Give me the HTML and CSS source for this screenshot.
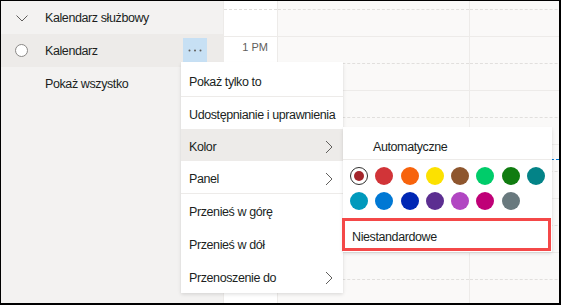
FILE: index.html
```html
<!DOCTYPE html>
<html lang="pl">
<head>
    <meta charset="UTF-8">
    <meta name="viewport" content="width=device-width, initial-scale=1.0">
    <title>Kalendarz</title>
    <link rel="stylesheet" href="styles.css">
</head>
<body>
    <div class="app">
        <aside class="sidebar">
            <div class="row">
                <svg class="icon" width="13" height="8" viewBox="0 0 13 8"><path d="M1 1.5 L6.5 7 L12 1.5" fill="none" stroke="#605e5c" stroke-width="1"/></svg>
                <span>Kalendarz służbowy</span>
            </div>
            <div class="row active">
                <span class="radio"></span>
                <span>Kalendarz</span>
                <button class="more">
                    <svg width="14" height="3" viewBox="0 0 14 3"><circle cx="1.5" cy="1.5" r="1" fill="#605e5c"/><circle cx="7" cy="1.5" r="1" fill="#605e5c"/><circle cx="12.5" cy="1.5" r="1" fill="#605e5c"/></svg>
                </button>
            </div>
            <div class="row">
                <span class="icon"></span>
                <span>Pokaż wszystko</span>
            </div>
        </aside>

        <section class="grid">
            <div class="col time">
                <div class="slot first"></div>
                <div class="slot hour"></div>
                <div class="slot half"><span class="label">1 PM</span></div>
                <div class="slot hour"></div>
                <div class="slot half"></div>
                <div class="slot hour"></div>
                <div class="slot half"></div>
                <div class="slot hour"></div>
                <div class="slot half"></div>
                <div class="slot hour"></div>
                <div class="slot half"></div>
                <div class="slot hour"></div>
            </div>
            <div class="col day">
                <div class="slot first"></div>
                <div class="slot hour"></div>
                <div class="slot half"></div>
                <div class="slot hour"></div>
                <div class="slot half"></div>
                <div class="slot hour"></div>
                <div class="slot half"></div>
                <div class="slot hour"></div>
                <div class="slot half"></div>
                <div class="slot hour"></div>
                <div class="slot half"></div>
                <div class="slot hour"></div>
            </div>
            <div class="col day wide">
                <div class="slot first"></div>
                <div class="slot hour"></div>
                <div class="slot half"></div>
                <div class="slot hour"></div>
                <div class="slot half"></div>
                <div class="slot hour"></div>
                <div class="slot half"></div>
                <div class="slot hour"></div>
                <div class="slot half"></div>
                <div class="slot hour"></div>
                <div class="slot half"></div>
                <div class="slot hour"></div>
            </div>
        </section>

        <div class="now-line"></div>

        <div class="menu context-menu">
            <div class="item">Pokaż tylko to</div>
            <div class="divider"></div>
            <div class="item">Udostępnianie i uprawnienia</div>
            <div class="item selected">Kolor
                <svg class="chevron" width="8" height="14" viewBox="0 0 8 14"><path d="M1 1 L7 7 L1 13" fill="none" stroke="#605e5c" stroke-width="1"/></svg>
            </div>
            <div class="item">Panel
                <svg class="chevron" width="8" height="14" viewBox="0 0 8 14"><path d="M1 1 L7 7 L1 13" fill="none" stroke="#605e5c" stroke-width="1"/></svg>
            </div>
            <div class="divider"></div>
            <div class="item tall">Przenieś w górę</div>
            <div class="item tall">Przenieś w dół</div>
            <div class="item tall">Przenoszenie do
                <svg class="chevron" width="8" height="14" viewBox="0 0 8 14"><path d="M1 1 L7 7 L1 13" fill="none" stroke="#605e5c" stroke-width="1"/></svg>
            </div>
        </div>

        <div class="menu color-menu">
            <div class="auto">Automatyczne</div>
            <div class="swatches">
                <span class="swatch current"><span class="dot"></span></span>
                <span class="swatch" style="background:#d13438"></span>
                <span class="swatch" style="background:#f7630c"></span>
                <span class="swatch" style="background:#fce100"></span>
                <span class="swatch" style="background:#8e562e"></span>
                <span class="swatch" style="background:#00cc6a"></span>
                <span class="swatch" style="background:#107c10"></span>
                <span class="swatch" style="background:#038387"></span>
                <span class="swatch" style="background:#0099bc"></span>
                <span class="swatch" style="background:#0078d4"></span>
                <span class="swatch" style="background:#0027b4"></span>
                <span class="swatch" style="background:#5c2e91"></span>
                <span class="swatch" style="background:#b146c2"></span>
                <span class="swatch" style="background:#bf0077"></span>
                <span class="swatch" style="background:#69797e"></span>
            </div>
            <div class="custom">Niestandardowe</div>
        </div>
    </div>
</body>
</html>
```

FILE: styles.css
```css
* {
    box-sizing: border-box;
}
body {
    margin: 0;
    font-family: "Liberation Sans", Arial, sans-serif;
    font-size: 12.5px;
    letter-spacing: -0.4px;
    color: #201f1e;
}
.app {
    position: relative;
    display: flex;
    width: 561px;
    height: 305px;
    border-style: solid;
    border-color: #000;
    border-width: 1px 2px 2px 1px;
    overflow: hidden;
    background: #fff;
}

/* sidebar */
.sidebar {
    width: 222px;
    flex-shrink: 0;
    background: #f3f2f1;
    white-space: nowrap;
}
.row {
    display: flex;
    align-items: center;
    height: 33px;
    padding-left: 14px;
}
.row.active {
    background: #edebe9;
}
.icon {
    width: 14px;
    margin-right: 16px;
    flex-shrink: 0;
}
.radio {
    width: 13px;
    height: 13px;
    margin-right: 17px;
    border: 1px solid #8a8886;
    border-radius: 50%;
    background: #fff;
}
.more {
    display: flex;
    align-items: center;
    justify-content: center;
    width: 24px;
    height: 25px;
    margin-left: auto;
    margin-right: 16px;
    padding: 0;
    border: none;
    background: #c7e0f4;
}

/* calendar grid */
.grid {
    display: flex;
    flex: 1;
}
.col {
    border-right: 1px solid #edebe9;
    background: #faf9f8;
}
.col.time {
    width: 55px;
    border-left: 1px solid #edebe9;
    background: #fff;
}
.col.day {
    width: 192px;
}
.col.day.wide {
    flex: 1;
    border-right: none;
}
.slot {
    height: 27px;
}
.slot.first {
    height: 9px;
    border-bottom: 1px dashed #e1dfdd;
}
.slot.hour {
    border-bottom: 1px solid #edebe9;
}
.slot.half {
    border-bottom: 1px dashed #e1dfdd;
}
.label {
    display: block;
    padding: 3px 9px 0 0;
    text-align: right;
    font-size: 11px;
    letter-spacing: 0;
    line-height: 14px;
    color: #605e5c;
}
.now-line {
    position: absolute;
    left: 469px;
    right: 0;
    top: 158px;
    border-top: 1px dashed #0078d4;
}

/* menus */
.menu {
    position: absolute;
    background: #fff;
    white-space: nowrap;
    box-shadow: 0 1.6px 3.6px rgba(0, 0, 0, 0.13), 0 0.3px 0.9px rgba(0, 0, 0, 0.11);
}
.context-menu {
    left: 180px;
    top: 61px;
    width: 162px;
    padding-top: 2px;
}
.item {
    display: flex;
    align-items: center;
    height: 32px;
    padding: 3px 10px 0 8px;
}
.item.tall {
    height: 33px;
}
.item.selected {
    background: #edebe9;
}
.chevron {
    margin-left: auto;
}
.divider {
    height: 1px;
    background: #edebe9;
}
.color-menu {
    left: 342px;
    top: 126px;
    width: 209px;
    padding-bottom: 1px;
}
.auto {
    height: 33px;
    padding: 8px 0 0 30px;
    line-height: 24px;
    border-bottom: 1px solid #edebe9;
}
.swatches {
    display: flex;
    flex-wrap: wrap;
    gap: 7px 7.3px;
    padding: 7px 0 8px 7px;
}
.swatch {
    display: flex;
    align-items: center;
    justify-content: center;
    width: 18px;
    height: 18px;
    border-radius: 50%;
}
.swatch.current {
    border: 1.5px solid #323130;
    background: #fff;
}
.dot {
    width: 10px;
    height: 10px;
    border-radius: 50%;
    background: #a4262c;
}
.custom {
    height: 33px;
    margin: 0 1px 0 -1px;
    padding: 6px 0 0 7px;
    line-height: 21px;
    border: 3px solid #f44848;
}
```
